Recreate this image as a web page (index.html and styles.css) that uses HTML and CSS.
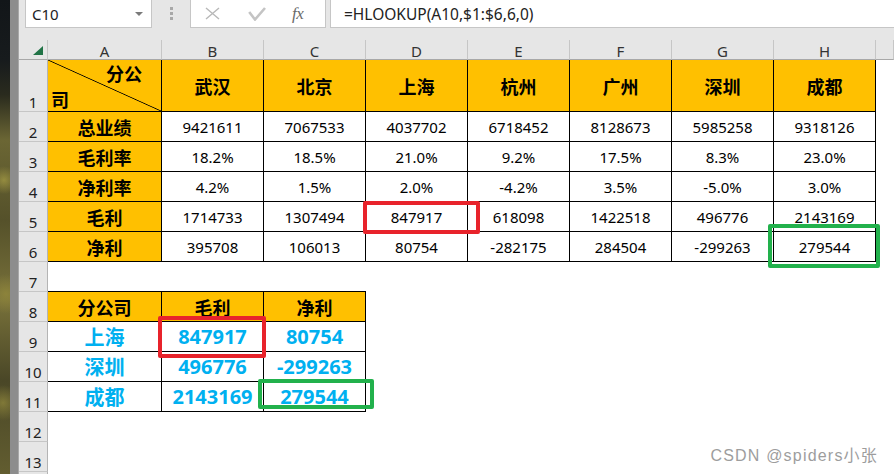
FILE: index.html
```html
<!DOCTYPE html>
<html lang="zh-CN">
<head>
<meta charset="utf-8">
<title>HLOOKUP</title>
<link rel="stylesheet" href="styles.css">
</head>
<body>
<div class="photo"></div>
<div class="frame"></div>
<div class="app">
  <div class="fbar">
    <div class="namebox"><span>C10</span><span class="caret"></span></div>
    <div class="grip"><i></i><i></i><i></i></div>
    <div class="fxbox">
      <svg class="ic-x" width="15" height="13" viewBox="0 0 15 13"><path d="M1 1L14 12M14 1L1 12" stroke="#b8b8b8" stroke-width="1.4" fill="none"/></svg>
      <svg class="ic-ok" width="18" height="14" viewBox="0 0 18 14"><path d="M1.2 5L7 12.5L17 1" stroke="#c4c4c4" stroke-width="2.6" fill="none"/></svg>
      <span class="fx">fx</span>
    </div>
    <div class="formula">=HLOOKUP(A10,$1:$6,6,0)</div>
  </div>

  <div class="sheet">
    <div class="corner"><span class="tri"></span></div>
    <div class="ch">A</div><div class="ch">B</div><div class="ch">C</div><div class="ch">D</div><div class="ch">E</div><div class="ch">F</div><div class="ch">G</div><div class="ch">H</div><div class="ch"></div>

    <div class="rh">1</div>
    <div class="b o a1"><span class="t">分公</span><span class="s">司</span></div>
    <div class="c b o">武汉</div><div class="c b o">北京</div><div class="c b o">上海</div><div class="c b o">杭州</div><div class="c b o">广州</div><div class="c b o">深圳</div><div class="c b o">成都</div><div></div>

    <div class="rh">2</div>
    <div class="c b o">总业绩</div>
    <div class="c b">9421611</div><div class="c b">7067533</div><div class="c b">4037702</div><div class="c b">6718452</div><div class="c b">8128673</div><div class="c b">5985258</div><div class="c b">9318126</div><div></div>

    <div class="rh">3</div>
    <div class="c b o">毛利率</div>
    <div class="c b">18.2%</div><div class="c b">18.5%</div><div class="c b">21.0%</div><div class="c b">9.2%</div><div class="c b">17.5%</div><div class="c b">8.3%</div><div class="c b">23.0%</div><div></div>

    <div class="rh">4</div>
    <div class="c b o">净利率</div>
    <div class="c b">4.2%</div><div class="c b">1.5%</div><div class="c b">2.0%</div><div class="c b">-4.2%</div><div class="c b">3.5%</div><div class="c b">-5.0%</div><div class="c b">3.0%</div><div></div>

    <div class="rh">5</div>
    <div class="c b o">毛利</div>
    <div class="c b">1714733</div><div class="c b">1307494</div><div class="c b mark">847917<span class="hl red hl-d5"></span></div><div class="c b">618098</div><div class="c b">1422518</div><div class="c b">496776</div><div class="c b">2143169</div><div></div>

    <div class="rh">6</div>
    <div class="c b o">净利</div>
    <div class="c b">395708</div><div class="c b">106013</div><div class="c b">80754</div><div class="c b">-282175</div><div class="c b">284504</div><div class="c b">-299263</div><div class="c b mark">279544<span class="hl green hl-h6"></span></div><div></div>

    <div class="rh">7</div>
    <div class="under"></div><div class="under"></div><div class="under"></div><div></div><div></div><div></div><div></div><div></div><div></div>

    <div class="rh">8</div>
    <div class="c b o">分公司</div><div class="c b o">毛利</div><div class="c b o">净利</div><div></div><div></div><div></div><div></div><div></div><div></div>

    <div class="rh">9</div>
    <div class="c b blue">上海</div><div class="c b blue mark">847917<span class="hl red hl-b9"></span></div><div class="c b blue">80754</div><div></div><div></div><div></div><div></div><div></div><div></div>

    <div class="rh">10</div>
    <div class="c b blue">深圳</div><div class="c b blue">496776</div><div class="c b blue">-299263</div><div></div><div></div><div></div><div></div><div></div><div></div>

    <div class="rh">11</div>
    <div class="c b blue">成都</div><div class="c b blue">2143169</div><div class="c b blue mark">279544<span class="hl green hl-c11"></span></div><div></div><div></div><div></div><div></div><div></div><div></div>

    <div class="rh">12</div>
    <div></div><div></div><div></div><div></div><div></div><div></div><div></div><div></div><div></div>

    <div class="rh">13</div>
    <div></div><div></div><div></div><div></div><div></div><div></div><div></div><div></div><div></div>

    <div class="rh"></div>
  </div>

  <div class="watermark">CSDN @spiders小张</div>
</div>
</body>
</html>
```

FILE: styles.css
```css
* { box-sizing: border-box; }

html, body {
  margin: 0;
  height: 474px;
  overflow: hidden;
}

body {
  display: flex;
  background: #fff;
  font-family: "Noto Sans", "Noto Sans CJK SC", sans-serif;
}

.photo {
  width: 10px;
  flex: none;
  background:
    radial-gradient(circle at 40% 38%, rgba(170, 160, 70, 0.7) 0, transparent 14px),
    radial-gradient(circle at 60% 62%, rgba(150, 140, 60, 0.7) 0, transparent 20px),
    radial-gradient(circle at 30% 85%, rgba(160, 150, 65, 0.6) 0, transparent 18px),
    linear-gradient(#121619 0, #171b1d 60px, #2a2b1e 95px, #6b6634 140px, #55512a 220px, #78713a 300px, #4a4727 380px, #625d30 474px);
}

.frame {
  width: 9px;
  flex: none;
  background: #8d8d8d;
  border-right: 1px solid #a8a8a8;
}

.app {
  flex: 1;
  min-width: 0;
  position: relative;
  background: #fff;
}

/* ---------- formula bar ---------- */
.fbar {
  height: 40px;
  background: #e6e6e6;
  display: flex;
  align-items: flex-start;
}

.namebox {
  margin-left: 6px;
  width: 127px;
  height: 28px;
  background: #fff;
  border: 1px solid #c6c6c6;
  border-top: none;
  display: flex;
  align-items: center;
  justify-content: space-between;
  padding: 0 8px 0 6px;
  font-size: 15px;
  color: #222;
}

.caret {
  width: 0;
  height: 0;
  border-left: 4px solid transparent;
  border-right: 4px solid transparent;
  border-top: 4px solid #7a7a7a;
}

.grip {
  width: 38px;
  display: flex;
  flex-direction: column;
  align-items: center;
  gap: 2px;
  padding-top: 7px;
}

.grip i {
  width: 3px;
  height: 3px;
  background: #a8a8a8;
}

.fxbox {
  width: 136px;
  height: 28px;
  background: #fff;
  border: 1px solid #c6c6c6;
  border-top: none;
  display: flex;
  align-items: center;
  padding-left: 14px;
}

.ic-ok { margin-left: 28px; }

.fx {
  margin-left: 26px;
  font-family: "Liberation Serif", serif;
  font-style: italic;
  font-size: 17px;
  color: #6a6a6a;
  letter-spacing: -0.5px;
}

.formula {
  flex: 1;
  margin-left: 4px;
  height: 28px;
  background: #fff;
  border: 1px solid #c6c6c6;
  border-top: none;
  border-right: none;
  padding-left: 13px;
  display: flex;
  align-items: center;
  font-size: 15.5px;
  color: #222;
}

/* ---------- sheet ---------- */
.sheet {
  display: grid;
  grid-template-columns: 29px 114px repeat(7, 102px) 1fr;
  grid-template-rows: 20px 52px repeat(13, 30px);
  font-size: 15px;
  color: #000;
}

.corner {
  background: #e6e6e6;
  border-right: 1px solid #c6c6c6;
  border-bottom: 1px solid #a8a8a8;
  display: flex;
  align-items: flex-end;
  justify-content: flex-end;
  padding: 0 4px 4px 0;
}

.tri {
  width: 0;
  height: 0;
  border-left: 10px solid transparent;
  border-bottom: 9px solid #217346;
}

.ch {
  background: #e6e6e6;
  border-right: 1px solid #c6c6c6;
  border-bottom: 1px solid #a8a8a8;
  display: flex;
  align-items: center;
  justify-content: center;
  padding-top: 3px;
  line-height: 1;
  color: #333;
}

.rh {
  background: #e6e6e6;
  border-right: 1px solid #b4b4b4;
  border-bottom: 1px solid #c6c6c6;
  display: flex;
  align-items: flex-end;
  justify-content: center;
  padding-bottom: 1px;
  line-height: 1;
  color: #222;
}

.c {
  display: flex;
  align-items: center;
  justify-content: center;
  white-space: nowrap;
}

.b {
  border-right: 1px solid #000;
  border-bottom: 1px solid #000;
}

.under {
  border-bottom: 1px solid #000;
}

.o {
  background: #ffc000;
  font-weight: 700;
  font-size: 18px;
}

.blue {
  color: #00b0f0;
  font-weight: 700;
  font-size: 20px;
}

.a1 {
  display: flex;
  flex-direction: column;
  justify-content: space-between;
  padding: 5px 19px 2px 3px;
  line-height: 18px;
  background:
    linear-gradient(to top right, transparent calc(50% - 0.8px), #000 50%, transparent calc(50% + 0.8px)),
    #ffc000;
}

.a1 .t { align-self: flex-end; }
.a1 .s { align-self: flex-start; }

/* ---------- highlight frames ---------- */
.mark { position: relative; }

.hl {
  position: absolute;
  z-index: 1;
  border: 4px solid;
  border-radius: 2px;
}

.red { border-color: #e8232b; }
.green { border-color: #22b14c; }

.hl-d5 { left: -3px; top: -1px; width: 117px; height: 33px; }
.hl-h6 { left: -6px; top: -8px; width: 112px; height: 44px; }
.hl-b9 { left: -4px; top: -6px; width: 108px; height: 42px; }
.hl-c11 { left: -6px; top: -3px; width: 116px; height: 30px; }

.watermark {
  position: absolute;
  right: 16px;
  bottom: 10px;
  font-family: "Liberation Sans", "Noto Sans CJK SC", sans-serif;
  font-size: 16px;
  letter-spacing: 1.2px;
  line-height: 1;
  color: #9d9d9d;
  white-space: nowrap;
}
```
